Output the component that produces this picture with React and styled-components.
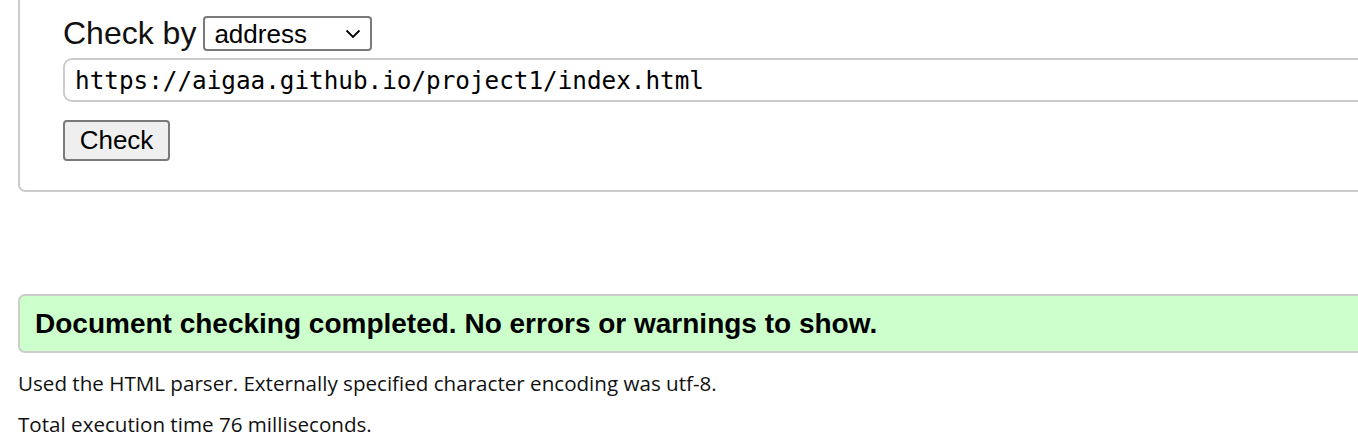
import React from 'react';
import styled, { createGlobalStyle } from 'styled-components';

const GlobalStyle = createGlobalStyle`
  html, body {
    margin: 0;
    padding: 0;
    background: #fff;
    overflow: hidden;
  }
  body {
    font-family: "Liberation Sans", Arial, sans-serif;
    color: #000;
  }
`;

const Page = styled.div`
  padding-left: 18px;
  width: 1400px;
`;

const Panel = styled.div`
  display: flex;
  flex-direction: column;
  align-items: flex-start;
  border: 2px solid #cccccc;
  border-top: none;
  border-radius: 0 0 7px 7px;
  padding: 16px 0 29px 43px;
`;

const CheckByRow = styled.div`
  display: flex;
  align-items: center;
  gap: 7px;
  height: 35px;
`;

const Label = styled.span`
  font-size: 32px;
  line-height: 35px;
  color: #111;
`;

const SelectWrap = styled.div`
  position: relative;
  width: 169px;
  height: 35px;
`;

const Select = styled.select`
  appearance: none;
  box-sizing: border-box;
  width: 100%;
  height: 100%;
  margin: 0;
  padding: 0 0 0 9px;
  border: 2px solid #7a7a7a;
  border-radius: 4px;
  background: #fff;
  font-family: "Liberation Sans", Arial, sans-serif;
  font-size: 26px;
  color: #000;
`;

const Chevron = styled.svg`
  position: absolute;
  right: 11px;
  top: 13px;
  pointer-events: none;
`;

const UrlInput = styled.input`
  box-sizing: border-box;
  margin-top: 7px;
  width: 1320px;
  height: 44px;
  padding: 0 0 0 10px;
  border: 2px solid #cccccc;
  border-radius: 9px;
  font-family: "DejaVu Sans Mono", "Liberation Mono", monospace;
  font-size: 24.3px;
  color: #000;
  background: #fff;
`;

const Button = styled.button`
  box-sizing: border-box;
  margin-top: 18px;
  width: 107px;
  height: 41px;
  padding: 0;
  border: 2px solid #7a7a7a;
  border-radius: 4px;
  background: #efefef;
  font-family: "Liberation Sans", Arial, sans-serif;
  font-size: 26px;
  color: #000;
`;

const Success = styled.div`
  box-sizing: border-box;
  margin-top: 102px;
  height: 59px;
  display: flex;
  align-items: center;
  padding-left: 15px;
  background: #ccffcc;
  border: 2px solid #cccccc;
  border-radius: 7px;
  font-weight: bold;
  font-size: 28px;
`;

const Details = styled.p`
  margin: ${(p) => p.$top}px 0 0;
  font-family: "Open Sans", "Noto Sans", sans-serif;
  font-size: 20.6px;
  line-height: 24px;
  color: #111;
`;

const App = () => (
  <Page>
    <GlobalStyle />
    <Panel>
      <CheckByRow>
        <Label>Check by</Label>
        <SelectWrap>
          <Select defaultValue="address">
            <option value="address">address</option>
            <option value="file">file upload</option>
            <option value="text">text input</option>
          </Select>
          <Chevron width="16" height="10" viewBox="0 0 16 10">
            <path d="M1.5 1.5 L8 8 L14.5 1.5" fill="none" stroke="#000" strokeWidth="1.8" />
          </Chevron>
        </SelectWrap>
      </CheckByRow>
      <UrlInput defaultValue="https://aigaa.github.io/project1/index.html" />
      <Button>Check</Button>
    </Panel>
    <Success>Document checking completed. No errors or warnings to show.</Success>
    <Details $top={18}>Used the HTML parser. Externally specified character encoding was utf-8.</Details>
    <Details $top={17}>Total execution time 76 milliseconds.</Details>
  </Page>
);

export default App;
